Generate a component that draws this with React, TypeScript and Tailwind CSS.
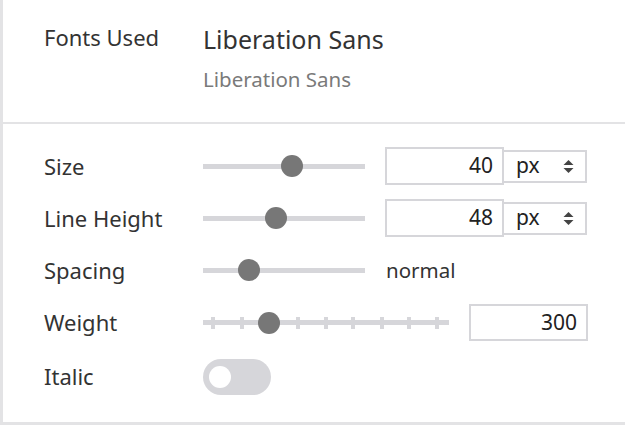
const font = { fontFamily: "'Noto Sans', 'Open Sans', sans-serif" };

const Slider = ({ width, pos }: { width: number; pos: number }) => (
  <div className="relative h-[22px] flex items-center" style={{ width }}>
    <div className="h-[5px] w-full bg-[#d6d6da]" />
    <div
      className="absolute top-0 h-[22px] w-[22px] -ml-[11px] rounded-full bg-[#777777]"
      style={{ left: pos }}
    />
  </div>
);

const TickSlider = () => {
  const ticks = [10, 39, 95, 123, 150, 179, 206, 234];
  return (
    <div className="relative h-[22px] w-[246px] flex items-center">
      <div className="h-[5px] w-full bg-[#d6d6da]" />
      {ticks.map((t) => (
        <div key={t} className="absolute top-[5px] h-[12px] w-[4px] -ml-[2px] bg-[#d6d6da]" style={{ left: t }} />
      ))}
      <div className="absolute top-0 left-[66px] h-[22px] w-[22px] -ml-[11px] rounded-full bg-[#777777]" />
    </div>
  );
};

const Stepper = () => (
  <svg width="11" height="15" viewBox="0 0 11 15" className="text-[#444]">
    <path d="M5.5 1 L10.5 6 H0.5 Z" fill="currentColor" />
    <path d="M5.5 14 L10.5 9 H0.5 Z" fill="currentColor" />
  </svg>
);

const NumberUnit = ({ value }: { value: string }) => (
  <div className="flex items-center">
    <div className="h-[38px] w-[119px] border-2 border-[#d6d6da] flex items-center justify-end pr-[9px] text-[21px] text-[#222]">
      {value}
    </div>
    <div className="h-[33px] w-[85px] -ml-[2px] border-2 border-[#d6d6da] flex items-center justify-between pl-[12px] pr-[11px] text-[21px] text-[#222]">
      <span>px</span>
      <Stepper />
    </div>
  </div>
);

export default function App() {
  return (
    <div className="w-[625px] h-[426px] bg-white" style={font}>
      <div className="h-[425px] border-l-[3px] border-b-[3px] border-[#e3e3e5] text-[#333]">
        <div className="h-[122px] flex pl-[41px] pt-[20px]">
          <div className="w-[159px] text-[22px] leading-[34px]">Fonts Used</div>
          <div>
            <div className="text-[25px] leading-[38px] text-[#333]">Liberation Sans</div>
            <div className="text-[20.5px] leading-[28px] mt-[7px] text-[#7a7a7a]">Liberation Sans</div>
          </div>
        </div>
        <div className="h-[2px] bg-[#e3e3e5]" />
        <div className="pl-[41px] pt-[16px] text-[22px]">
          <div className="h-[52px] flex items-center">
            <div className="w-[159px]">Size</div>
            <Slider width={162} pos={89} />
            <div className="ml-[20px]"><NumberUnit value="40" /></div>
          </div>
          <div className="h-[52px] flex items-center">
            <div className="w-[159px]">Line Height</div>
            <Slider width={162} pos={73} />
            <div className="ml-[20px]"><NumberUnit value="48" /></div>
          </div>
          <div className="h-[52px] flex items-center">
            <div className="w-[159px]">Spacing</div>
            <Slider width={162} pos={46} />
            <div className="ml-[21px] text-[20.5px] text-[#333]">normal</div>
          </div>
          <div className="h-[53px] flex items-center">
            <div className="w-[159px]">Weight</div>
            <TickSlider />
            <div className="ml-[20px] h-[37px] w-[119px] border-2 border-[#d6d6da] flex items-center justify-end pr-[9px] text-[21px] text-[#222]">
              300
            </div>
          </div>
          <div className="h-[55px] flex items-center">
            <div className="w-[159px]">Italic</div>
            <div className="h-[36px] w-[68px] rounded-full bg-[#d6d6da] flex items-center pl-[6px]">
              <div className="h-[22px] w-[22px] rounded-full bg-white" />
            </div>
          </div>
        </div>
      </div>
    </div>
  );
}
